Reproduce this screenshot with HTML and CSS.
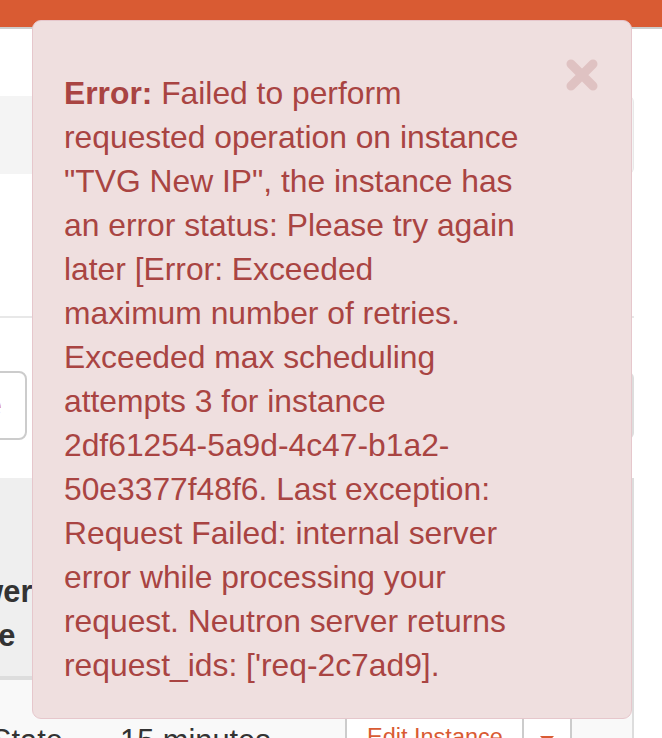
FILE: index.html
```html
<!DOCTYPE html>
<html lang="en">
<head>
    <meta charset="UTF-8">
    <meta name="viewport" content="width=device-width, initial-scale=1.0">
    <title>Instances</title>
    <link rel="stylesheet" href="styles.css">
</head>
<body>

    <!-- Top navigation bar -->
    <header class="topbar"></header>

    <main class="page">
        <div class="breadcrumb-bar"></div>
        <div class="page-header"></div>

        <!-- Table actions -->
        <div class="toolbar">
            <button class="btn btn-launch">Launch Instance</button>
            <div class="filter-box"></div>
        </div>

        <!-- Instances table -->
        <div class="table">
            <div class="thead">
                <div class="th">Power State</div>
                <div class="th">Age</div>
                <div class="th">Actions</div>
            </div>
            <div class="tr">
                <div class="td">No State</div>
                <div class="td">15 minutes</div>
                <div class="td td-actions">
                    <div class="btn-group">
                        <button class="btn btn-action">Edit Instance</button>
                        <button class="btn btn-caret"><span class="caret"></span></button>
                    </div>
                </div>
            </div>
        </div>
    </main>

    <!-- Error message popup -->
    <div class="alert">
        <svg class="alert-close" width="34" height="34" viewBox="0 0 34 34">
            <path d="M6 6 L28 28 M28 6 L6 28" stroke="currentColor" stroke-width="9" stroke-linecap="round"/>
        </svg>
        <p class="alert-text"><strong>Error:</strong> Failed to perform requested operation on instance "TVG New IP", the instance has an error status: Please try again later [Error: Exceeded maximum number of retries. Exceeded max scheduling attempts 3 for instance 2df61254-5a9d-4c47-b1a2-50e3377f48f6. Last exception: Request Failed: internal server error while processing your request. Neutron server returns request_ids: ['req-2c7ad9].</p>
    </div>

</body>
</html>
```

FILE: styles.css
```css
/* Colours */
:root {
    --orange: #d95b33;
    --text-dark: #333333;
    --border-light: #dddddd;
    --danger-bg: #efdfdf;
    --danger-border: #e6c7cc;
    --danger-text: #a94442;
}

* {
    margin: 0;
    padding: 0;
    box-sizing: border-box;
}

body {
    font-family: 'Liberation Sans', Arial, sans-serif;
    font-size: 30.8px;
    line-height: 44px;
    color: var(--text-dark);
    background: #ffffff;
    overflow: hidden;
    height: 738px;
}

/* Top bar */
.topbar {
    height: 29px;
    background: var(--orange);
    border-bottom: 2px solid #cdcdcd;
}

.page {
    width: 634px;
}

.breadcrumb-bar {
    margin-top: 67px;
    height: 78px;
    background: #f4f4f4;
    border-right: 1px solid #e8e8e8;
    border-radius: 0 6px 6px 0;
}

.page-header {
    height: 144px;
    border-bottom: 2px solid #e8e8e8;
}

/* Toolbar */
.toolbar {
    margin-top: 53px;
    height: 69px;
    display: flex;
    justify-content: space-between;
}

.btn {
    font-family: inherit;
    background: #ffffff;
    border: 2px solid #cccccc;
    color: var(--orange);
    white-space: nowrap;
}

.btn-launch {
    width: 260px;
    margin-left: -233px;
    border-radius: 8px;
    text-align: right;
    padding-right: 23px;
    font-size: 30.8px;
    overflow: hidden;
}

.filter-box {
    width: 220px;
    margin-top: 1px;
    height: 67px;
    border: 2px solid var(--border-light);
    border-radius: 6px;
}

/* Table */
.table {
    margin-top: 38px;
    margin-left: -75px;
    width: 709px;
    border-right: 2px solid var(--border-light);
}

.thead,
.tr {
    display: grid;
    grid-template-columns: 177px 225px 1fr;
}

.thead {
    height: 202px;
    background: #efefef;
    border-bottom: 4px solid var(--border-light);
}

.th {
    align-self: end;
    padding: 0 18px 18px 15px;
    font-weight: bold;
}

.tr {
    background: #f9f9f9;
    height: 100px;
}

.td {
    padding: 39px 18px 0 18px;
    white-space: nowrap;
}

.td-actions {
    padding-top: 30px;
}

.btn-group {
    display: flex;
}

.btn-action {
    font-size: 23.5px;
    line-height: 33px;
    padding: 9px 19px 9px 20px;
    border-radius: 8px 0 0 8px;
    width: 179px;
    text-align: left;
}

.btn-caret {
    width: 48px;
    border-left: none;
    border-radius: 0 8px 8px 0;
    display: flex;
    justify-content: center;
    padding-top: 24px;
}

.caret {
    width: 0;
    height: 0;
    border-top: 8px solid var(--orange);
    border-left: 7px solid transparent;
    border-right: 7px solid transparent;
}

/* Error alert, shown over the page */
.alert {
    position: absolute;
    top: 20px;
    left: 32px;
    width: 600px;
    padding: 50px 112px 31px 31px;
    background: var(--danger-bg);
    border: 1px solid var(--danger-border);
    border-radius: 9px;
    color: var(--danger-text);
    font-size: 31.8px;
    line-height: 44px;
}

.alert-close {
    position: absolute;
    top: 37px;
    right: 32px;
    color: #dfc2c2;
}
```
